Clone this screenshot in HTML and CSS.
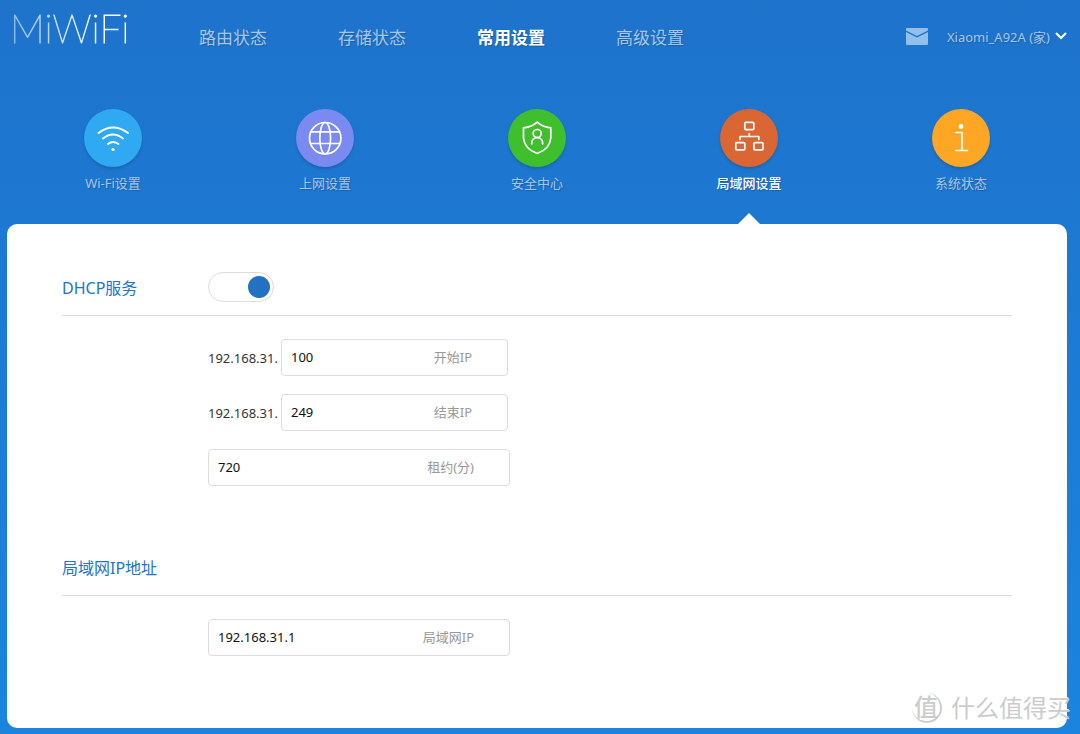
FILE: index.html
```html
<!DOCTYPE html>
<html lang="zh-CN">
<head>
<meta charset="utf-8">
<title>MiWiFi</title>
<link rel="stylesheet" href="styles.css">
</head>
<body>
<header class="header">
  <a class="logo" href="#">MiWiFi</a>
  <nav class="nav">
    <a class="nav-link" href="#">路由状态</a>
    <a class="nav-link" href="#">存储状态</a>
    <a class="nav-link nav-link-active" href="#">常用设置</a>
    <a class="nav-link" href="#">高级设置</a>
  </nav>
  <button class="mail" type="button" aria-label="消息">
    <svg width="22" height="17" viewBox="0 0 22 17" fill="currentColor"><path d="M1 0h20q1 0 1 1v1.500L11 8 0 2.500V1q0-1 1-1z"/><path d="M0 4l11 5.500L22 4v12q0 1-1 1H1q-1 0-1-1z"/></svg>
  </button>
  <button class="device" type="button">Xiaomi_A92A (家)
    <svg width="12" height="8" viewBox="0 0 12 8" fill="none" stroke="#fff" stroke-width="2"><path d="M1 1l5 5 5-5"/></svg>
  </button>
</header>

<nav class="tabs">
  <a class="tab" href="#">
    <span class="tab-icon wifi"><svg width="58" height="58" viewBox="0 0 58 58"><path d="M14.500 24Q29 13 44 24M19 29.500Q29 21.500 39 29.500M24 35Q29 31 34.500 35"/><circle class="dot" cx="29" cy="40.500" r="1.600"/></svg></span>
    <span class="tab-label">Wi-Fi设置</span>
  </a>
  <a class="tab" href="#">
    <span class="tab-icon globe"><svg width="58" height="58" viewBox="0 0 58 58"><circle cx="29.200" cy="29.200" r="15.700"/><ellipse cx="29.200" cy="29.200" rx="5.400" ry="15.700"/><path d="M15 22.800h28.400M15 34.500h28.400"/></svg></span>
    <span class="tab-label">上网设置</span>
  </a>
  <a class="tab" href="#">
    <span class="tab-icon safe"><svg width="58" height="58" viewBox="0 0 58 58"><path d="M29.200 13.200Q24 18 15.500 18.800V29Q16.500 40 29.200 44.500Q41.900 40 42.800 29V18.800Q34.400 18 29.200 13.200z"/><circle cx="29.200" cy="24.500" r="4"/><path d="M23.700 35Q23.500 29 29.200 28.500Q34.900 29 34.700 35"/></svg></span>
    <span class="tab-label">安全中心</span>
  </a>
  <a class="tab tab-active" href="#">
    <span class="tab-icon lan"><svg width="58" height="58" viewBox="0 0 58 58"><rect x="24.800" y="13.400" width="9" height="7.200" rx="1"/><rect x="15.800" y="33.600" width="9" height="7.200" rx="1"/><rect x="34" y="33.600" width="9" height="7.200" rx="1"/><path d="M29.300 24.500v3M20 30.500v-3h18.800v3"/></svg></span>
    <span class="tab-label">局域网设置</span>
  </a>
  <a class="tab" href="#">
    <span class="tab-icon info"><svg width="58" height="58" viewBox="0 0 58 58"><circle class="dot" cx="29" cy="17.500" r="2.400"/><path d="M24 23.500h6V41.500M24 41.500h11.500"/></svg></span>
    <span class="tab-label">系统状态</span>
  </a>
</nav>

<main class="panel">
  <section class="section">
    <div class="section-head">
      <h2 class="section-title" id="dhcp-title">DHCP服务</h2>
      <input class="switch" type="checkbox" role="switch" aria-labelledby="dhcp-title" checked>
    </div>
    <div class="rows">
      <div class="row"><span class="prefix">192.168.31.</span><div class="field field-short"><input class="field-input" id="start" type="text" value="100"><label class="field-label" for="start">开始IP</label></div></div>
      <div class="row"><span class="prefix">192.168.31.</span><div class="field field-short"><input class="field-input" id="end" type="text" value="249"><label class="field-label" for="end">结束IP</label></div></div>
      <div class="row"><div class="field"><input class="field-input" id="lease" type="text" value="720"><label class="field-label" for="lease">租约(分)</label></div></div>
    </div>
  </section>
  <section class="section">
    <div class="section-head">
      <h2 class="section-title">局域网IP地址</h2>
    </div>
    <div class="rows">
      <div class="row"><div class="field"><input class="field-input" id="lan" type="text" value="192.168.31.1"><label class="field-label" for="lan">局域网IP</label></div></div>
    </div>
  </section>
</main>

<div class="watermark"><span class="seal">值</span><span>什么值得买</span></div>
</body>
</html>
```

FILE: styles.css
```css
* {
  box-sizing: border-box;
}

body {
  position: relative;
  display: flex;
  flex-direction: column;
  min-height: 100vh;
  margin: 0;
  padding: 0 13px 6px 7px;
  overflow-x: hidden;
  background: linear-gradient(#1e73cb, #1a84de);
  font-family: "Noto Sans", "Noto Sans CJK SC", sans-serif;
  font-size: 13px;
  color: #333;
}

a {
  color: inherit;
  text-decoration: none;
}

button {
  padding: 0;
  border: 0;
  background: none;
  color: inherit;
  font: inherit;
}

svg {
  display: block;
}

.header {
  display: flex;
  align-items: center;
  height: 72px;
  color: #a5c7eb;
}

.logo {
  width: 192px;
  height: 64px;
  padding-left: 3px;
  background: linear-gradient(90deg, #8ab7e5, #fff 100px);
  background-clip: text;
  color: transparent;
  font-family: Lato, sans-serif;
  font-size: 39px;
  font-weight: 100;
  line-height: 48px;
  -webkit-text-stroke: 1px transparent;
}

.nav {
  display: flex;
  flex: 1;
  gap: 71px;
  font-size: 17px;
  text-shadow: 1px 1px 1px #1a5ea8;
}

.nav-link-active {
  color: #fff;
  font-weight: 700;
}

.mail {
  margin-right: 19px;
  color: #94bfeb;
}

.device {
  display: flex;
  align-items: center;
  gap: 5px;
  text-shadow: 1px 1px 1px #1a5ea8;
}

.tabs {
  display: grid;
  grid-template-columns: repeat(5, 1fr);
  padding-top: 37px;
  color: #a5c7eb;
}

.tab {
  display: flex;
  flex-direction: column;
  align-items: center;
  gap: 6px;
  height: 115px;
  text-shadow: 1px 1px 1px #1a5ea8;
}

.tab-active {
  color: #fff;
  font-weight: 500;
}

.tab-active::after {
  width: 22px;
  height: 11px;
  margin-top: auto;
  background: #fff;
  clip-path: polygon(50% 0, 100% 100%, 0 100%);
  content: "";
}

.tab-icon {
  border-radius: 50%;
  box-shadow: 0 2px 3px rgba(0, 0, 0, 0.15);
  fill: none;
  stroke: #fff;
  stroke-width: 1.7;
  stroke-linecap: round;
  stroke-linejoin: round;
}

.dot {
  fill: #fff;
  stroke: none;
}

.wifi {
  background: #2ea9f2;
  stroke-width: 2;
}

.globe {
  background: #7b8af0;
}

.safe {
  background: #3fbf2d;
}

.lan {
  background: #da6633;
}

.info {
  background: #ffa624;
}

.tab-label {
  line-height: 20px;
}

.panel {
  display: flex;
  flex: 1;
  flex-direction: column;
  gap: 66px;
  padding: 48px 55px;
  border-radius: 10px;
  background: #fff;
}

.section-head {
  display: flex;
  align-items: center;
  height: 44px;
  padding-bottom: 13px;
  border-bottom: 1px solid #dcdcdc;
}

.section-title {
  width: 146px;
  margin: 0;
  color: #2274c9;
  font-size: 16px;
  font-weight: 400;
}

.switch {
  display: flex;
  align-items: center;
  justify-content: flex-end;
  width: 66px;
  height: 30px;
  margin: 0;
  padding: 0 3px;
  border: 1px solid #ddd;
  border-radius: 15px;
  background: #fff;
  appearance: none;
}

.switch::before {
  width: 22px;
  height: 22px;
  border-radius: 50%;
  background: #2371c2;
  content: "";
}

.switch:not(:checked) {
  justify-content: flex-start;
}

.rows {
  display: grid;
  gap: 18px;
  padding: 23px 0 0 146px;
}

.row {
  display: flex;
  align-items: center;
}

.prefix {
  width: 73px;
}

.field {
  display: flex;
  align-items: center;
  width: 302px;
  height: 37px;
  padding: 0 35px 2px 9px;
  border: 1px solid #ddd;
  border-radius: 4px;
}

.field-short {
  width: 227px;
}

.field-input {
  flex: 1;
  min-width: 0;
  padding: 0;
  border: 0;
  outline: 0;
  background: none;
  color: #111;
  font: inherit;
}

.field-label {
  color: #999;
}

.watermark {
  position: absolute;
  right: 9px;
  bottom: 8px;
  display: flex;
  align-items: center;
  gap: 9px;
  color: #ccc;
  font-size: 24px;
  line-height: 36px;
  text-shadow: -1px -1px 0 #fff;
}

.seal {
  width: 30px;
  height: 30px;
  border-right: 2px solid #ccc;
  border-bottom: 2px solid #ccc;
  border-radius: 50%;
  font-weight: 500;
  line-height: 28px;
  text-align: center;
}
```
